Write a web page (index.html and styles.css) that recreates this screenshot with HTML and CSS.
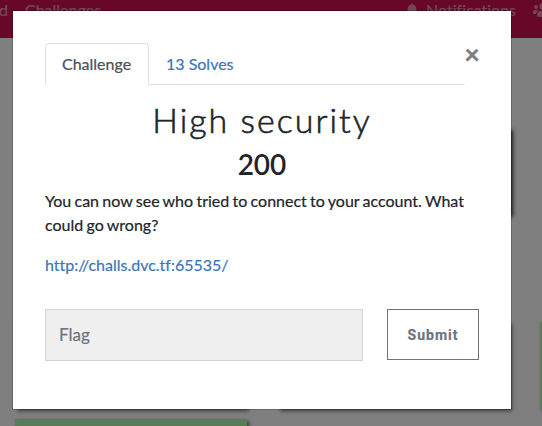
FILE: index.html
```
<!DOCTYPE html>
<html lang="en">
<head>
    <meta charset="UTF-8">
    <meta name="viewport" content="width=device-width, initial-scale=1.0">
    <title>Challenges</title>
    <link rel="stylesheet" href="styles.css">
</head>
<body>
    <nav class="navbar">
        <span class="nav-link board">d</span>
        <span class="nav-link">Challenges</span>
        <span class="nav-link notifications">
            <svg class="bell" viewBox="0 0 448 512"><path d="M224 512c35 0 64-29 64-64H160c0 35 29 64 64 64zm215-150c-19-21-55-52-55-154 0-78-54-140-128-155V32a32 32 0 0 0-64 0v21C118 68 64 130 64 208c0 102-36 133-55 154-6 6-9 14-9 22 0 16 13 32 32 32h384c19 0 32-16 32-32 0-8-3-16-9-22z"/></svg>
            Notifications
        </span>
        <svg class="users" viewBox="0 0 640 512"><path d="M96 224a64 64 0 1 0 0-128 64 64 0 0 0 0 128zm448 0a64 64 0 1 0 0-128 64 64 0 0 0 0 128zm32 32h-64c-18 0-34 7-45 18 40 22 69 62 75 110h66c18 0 32-14 32-32v-32c0-35-29-64-64-64zm-256 0a112 112 0 1 0 0-224 112 112 0 0 0 0 224zm77 32h-8c-42 20-96 20-138 0h-8c-64 0-115 52-115 115v29c0 27 21 48 48 48h288c27 0 48-21 48-48v-29c0-63-51-115-115-115zm-224-14c-11-11-27-18-45-18H64c-35 0-64 29-64 64v32c0 18 14 32 32 32h66c6-48 35-88 75-110z"/></svg>
    </nav>

    <main class="board-grid">
        <div class="card open"></div>
        <div class="card open"></div>
        <div class="card solved row-two"></div>
        <div class="card solved row-two"></div>
        <div class="card solved row-two"></div>
        <div class="card solved row-three"></div>
    </main>

    <div class="backdrop">
        <div class="modal">
            <button class="close" aria-label="Close">×</button>
            <ul class="tabs">
                <li class="tab active">Challenge</li>
                <li class="tab">13 Solves</li>
            </ul>
            <h2 class="name">High security</h2>
            <h3 class="value">200</h3>
            <p class="desc">You can now see who tried to connect to your account. What could go wrong?</p>
            <p class="desc"><a class="link" href="#">http://challs.dvc.tf:65535/</a></p>
            <form class="submit-row">
                <input class="flag" type="text" placeholder="Flag">
                <button class="submit" type="button">Submit</button>
            </form>
        </div>
    </div>
</body>
</html>
```
FILE: styles.css
```
* {
    box-sizing: border-box;
}
body {
    margin: 0;
    height: 426px;
    overflow: hidden;
    background: #fff;
    color: #212529;
    font-family: Lato, sans-serif;
    font-size: 16px;
    line-height: 24px;
    font-variant-ligatures: none;
    -webkit-text-stroke: 0.2px;
}
.navbar {
    display: flex;
    height: 38px;
    overflow: hidden;
    background: #ce1050;
    color: rgba(255, 255, 255, 0.5);
}
.nav-link {
    margin-top: -2px;
}
.board {
    width: 25px;
    text-indent: -1px;
}
.notifications {
    display: flex;
    gap: 8px;
    margin-left: auto;
}
.bell {
    width: 12px;
    height: 14px;
    margin-top: 5px;
    fill: currentColor;
}
.users {
    flex: none;
    width: 20px;
    height: 16px;
    margin: 2px -11px 0 17px;
    fill: currentColor;
}

/* challenge cards behind the dialog */
.board-grid {
    display: grid;
    grid-template-columns: repeat(3, 232px);
    grid-template-rows: 87px 87px 87px;
    column-gap: 30.5px;
    height: 388px;
    padding: 90px 0 0 15px;
    overflow: hidden;
}
.card {
    box-shadow: 2px 2px 4px #777;
}
.open {
    background: #3c3c3c;
    box-shadow: 3px 2px 4px #3c3c3c;
}
.solved {
    background: #b2f6b2;
}
.row-two {
    grid-row: 2;
    margin: 107px 0 -107px;
}
.row-three {
    grid-row: 3;
    margin: 117px 0 -117px;
}

.backdrop {
    position: fixed;
    inset: 0;
    padding: 10px 12px;
    background: rgba(0, 0, 0, 0.5);
}
.modal {
    position: relative;
    width: 500px;
    height: 400px;
    padding: 32px;
    background: #fff;
    background-clip: padding-box;
    border: 1px solid rgba(0, 0, 0, 0.2);
}
.close {
    position: absolute;
    top: 30px;
    right: 31px;
    padding: 0;
    border: 0;
    background: none;
    color: #7f7f7f;
    font: 900 27px/26px Lato, sans-serif;
}
.tabs {
    display: flex;
    width: 420px;
    height: 42px;
    margin: 0 0 16px;
    padding: 0;
    border-bottom: 1px solid #dee2e6;
    list-style: none;
}
.tab {
    height: 42px;
    padding: 8px 16px;
    border: 1px solid transparent;
    border-radius: 4px 4px 0 0;
    color: #3b76b8;
}
.active {
    width: 104px;
    background: #fff;
    border-color: #dee2e6 #dee2e6 #fff;
    color: #495057;
}
.name {
    margin: 0 0 8px;
    text-align: center;
    font-size: 34px;
    font-weight: 300;
    line-height: 38px;
    letter-spacing: 2px;
    -webkit-text-stroke: 0.6px;
}
.value {
    margin: 0 0 8px;
    text-align: center;
    font-size: 28px;
    font-weight: 600;
    line-height: 34px;
    -webkit-text-stroke: 0;
}
.desc {
    margin: 0 0 16px;
    word-spacing: -0.8px;
}
.link {
    color: #3b76b8;
    text-decoration: none;
}
.submit-row {
    display: flex;
    align-items: flex-start;
    gap: 24px;
    margin-top: 32px;
}
.flag {
    width: 318px;
    height: 52px;
    padding: 0 13px 2px;
    border: 1px solid #ced4da;
    border-radius: 0;
    background: #efefef;
    font: 17px Lato, sans-serif;
}
.flag::placeholder {
    color: #6c757d;
}
.submit {
    width: 92px;
    height: 51px;
    padding: 0;
    border: 1px solid #6c757d;
    background: #fff;
    color: #6c757d;
    font: bold 14px Roboto, sans-serif;
    letter-spacing: 1px;
}
```
